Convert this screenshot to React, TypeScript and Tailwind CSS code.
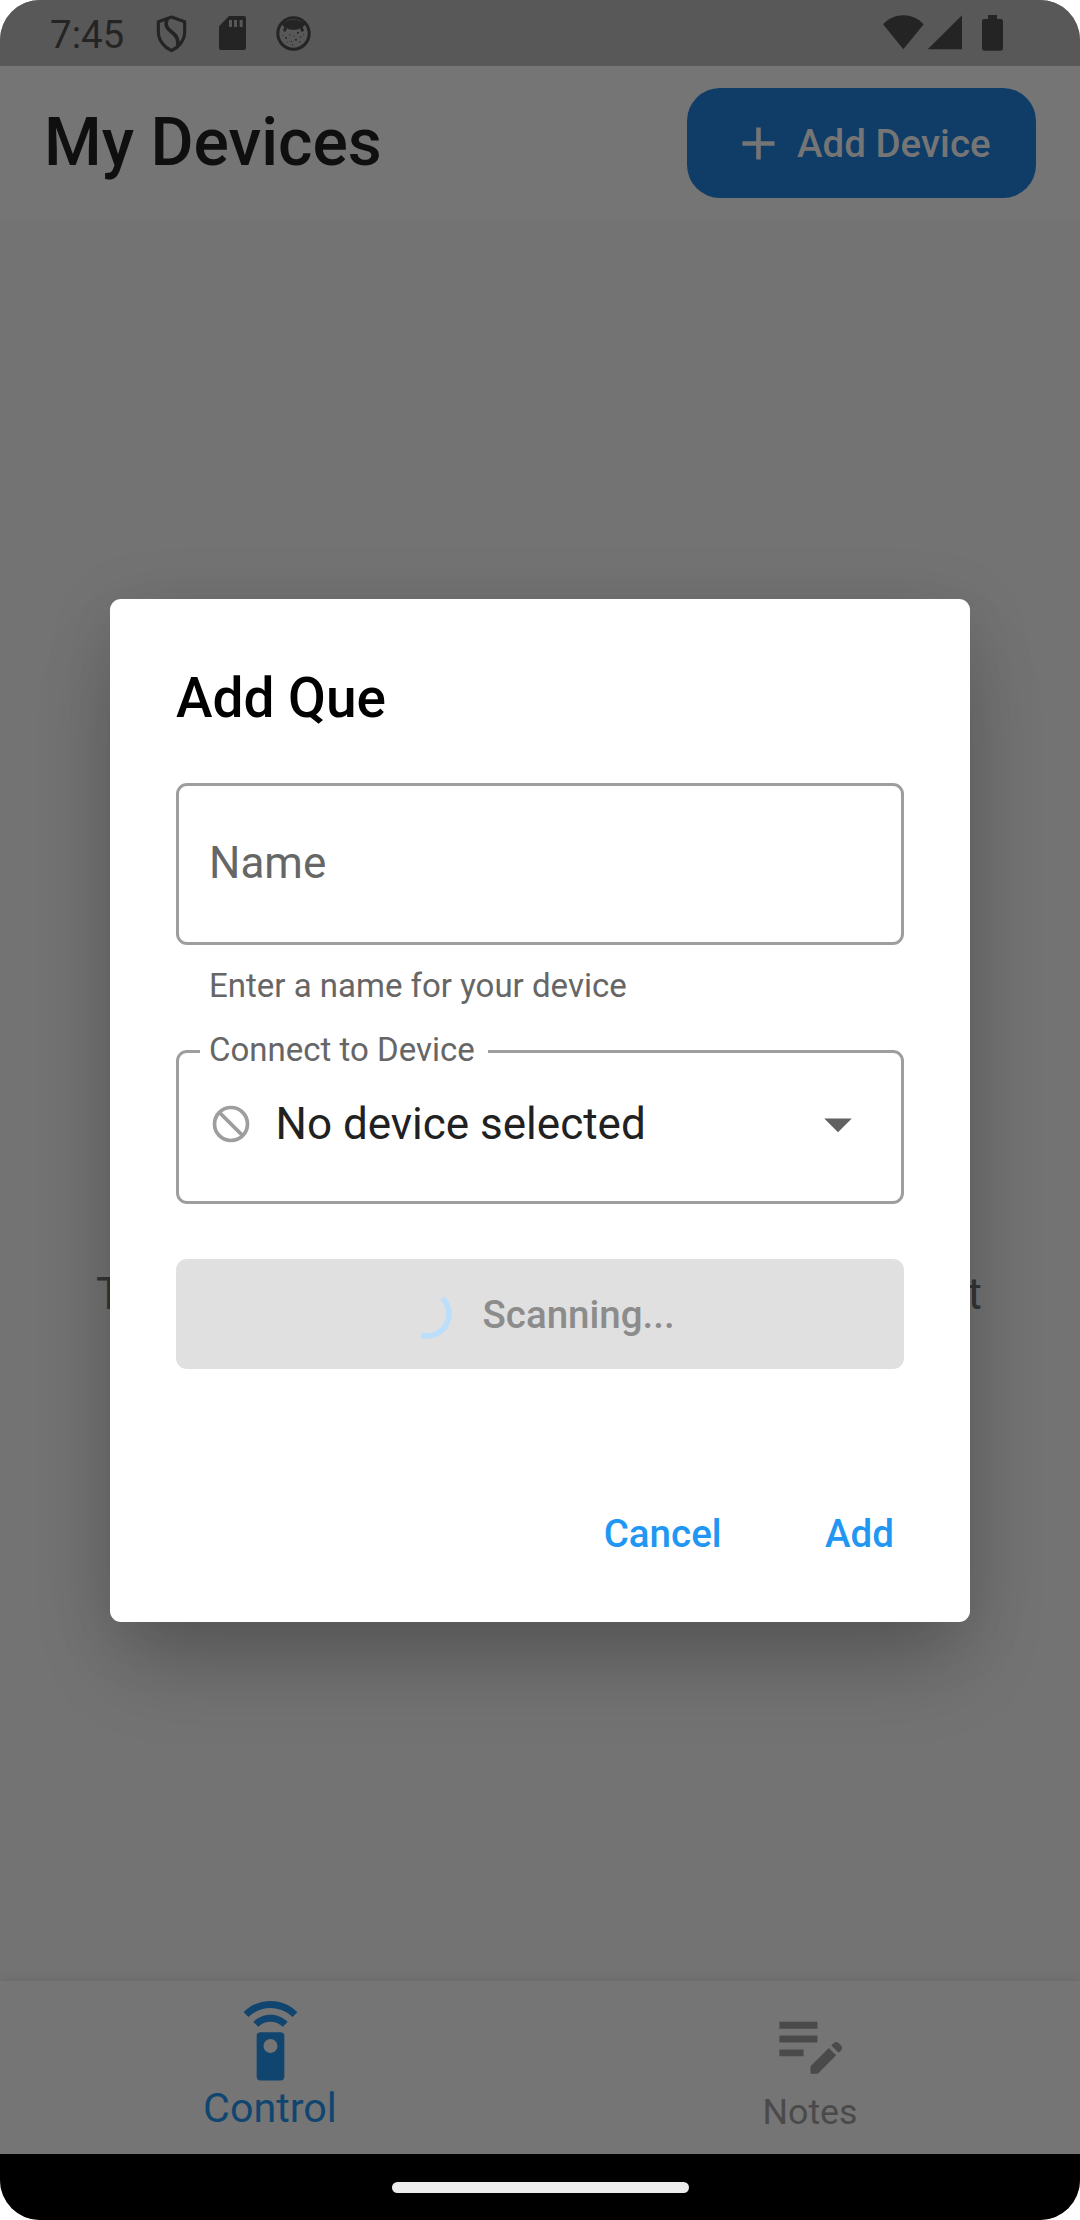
import type { ReactNode } from "react";

function StatusBar() {
  return (
    <div className="flex h-[66px] shrink-0 items-start justify-between bg-[#585858] text-[#242424]">
      <div className="flex items-start">
        <span className="ml-[50px] mt-[12px] w-[74px] text-[38.5px] leading-[45px]">7:45</span>
        {/* Shield */}
        <svg className="ml-[32px] mt-[14.5px] h-[38px] w-[31px]" viewBox="0 0 93 114" fill="none" stroke="currentColor" strokeWidth="9.5" strokeLinejoin="round">
          <path d="M46.500 6L86 20V51C86 76 68 97 46.500 107C25 97 7 76 7 51V20Z" />
          <path strokeWidth="11" d="M34 11C25 31 33 40 47 51C62 63 68 72 65 92" />
        </svg>
        {/* Memory card */}
        <svg className="ml-[32px] mt-[16px] h-[34px] w-[27px]" viewBox="0 0 81 102">
          <path fill="currentColor" d="M30 0H75q6 0 6 6V96q0 6-6 6H6q-6 0-6-6V31Z" />
          <path fill="#585858" d="M30 12h9v21h-9zM45 12h9v21h-9zM62 12h9v21h-9z" />
        </svg>
        {/* Round face */}
        <svg className="ml-[30px] mt-[15.700px] h-[35px] w-[35px]" viewBox="0 0 105 105">
          <circle cx="52.500" cy="52.500" r="47" fill="none" stroke="currentColor" strokeWidth="9" />
          <path fill="currentColor" d="M18 26C32 6 73 6 87 26L80 34L84 44L77 48L72 37C64 43 42 43 33 37L28 48L21 44L25 34Z" />
          <g fill="currentColor">
            <circle cx="30" cy="66" r="3" />
            <circle cx="66" cy="50" r="3" />
            <circle cx="60" cy="71" r="3" />
            <circle cx="46" cy="76" r="2" />
            <circle cx="42" cy="56" r="2" />
            <circle cx="74" cy="63" r="2" />
            <circle cx="54" cy="60" r="1.500" />
            <circle cx="50" cy="87" r="2" />
            <circle cx="72" cy="78" r="2" />
            <circle cx="35" cy="79" r="1.500" />
            <circle cx="20" cy="58" r="1.500" />
            <circle cx="83" cy="56" r="1.500" />
          </g>
        </svg>
      </div>
      <svg className="mr-[77px] mt-[15px] h-[36px] w-[120px]" viewBox="0 0 360 108" fill="currentColor">
        <path d="M0 28C34-8 88-8 122 28L61 103Z" />
        <path d="M134 103H237V1Z" />
        <path d="M315 0h27v12h12q6 0 6 7v81q0 7-6 7h-51q-6 0-6-7v-81q0-7 6-7h12z" />
      </svg>
    </div>
  );
}

function Header() {
  return (
    <header className="flex h-[154px] shrink-0 items-center justify-between bg-[#757575] px-[44px]">
      <h1 className="text-[66px] font-medium leading-[78px] text-[#0f0f0f]">My Devices</h1>
      <button className="flex h-[110px] w-[349px] items-center gap-[11px] rounded-[33px] bg-[#0f3d68] pl-[44px] text-[#757575]">
        <svg className="size-[55px]" viewBox="0 0 24 24" fill="currentColor">
          <path d="M19 13h-6v6h-2v-6H5v-2h6V5h2v6h6v2z" />
        </svg>
        <span className="whitespace-nowrap pt-[2px] text-[38.5px] font-medium leading-[46px]">Add Device</span>
      </button>
    </header>
  );
}

function NavItem({ children, className }: { children: ReactNode; className: string }) {
  return <div className={`flex flex-1 flex-col items-center pt-[20px] ${className}`}>{children}</div>;
}

function BottomNav() {
  return (
    <nav className="flex h-[173px] shrink-0 bg-[#757575] shadow-[0_-2px_10px_rgba(0,0,0,0.08)]">
      <NavItem className="text-[#104570]">
        <svg className="h-[83px] w-[83px]" viewBox="0 0 24 24" fill="currentColor">
          <path d="M15 9H9c-.55 0-1 .45-1 1v12c0 .55.45 1 1 1h6c.55 0 1-.45 1-1V10c0-.55-.45-1-1-1zm-3 6c-1.100 0-2-.9-2-2s.9-2 2-2 2 .9 2 2-.9 2-2 2zM7.050 6.050l1.410 1.410C9.370 6.560 10.620 6 12 6s2.630.56 3.540 1.460l1.410-1.410C15.680 4.780 13.930 4 12 4s-3.680.78-4.950 2.050zM12 0C8.960 0 6.210 1.230 4.220 3.220l1.410 1.410C7.260 3.010 9.510 2 12 2s4.740 1.010 6.360 2.640l1.410-1.410C17.790 1.230 15.040 0 12 0z" />
        </svg>
        <span className="text-[41.25px] leading-[48px]">Control</span>
      </NavItem>
      <NavItem className="text-[#4a4a4a]">
        <svg className="h-[83px] w-[83px]" viewBox="0 0 24 24" fill="currentColor">
          <path d="M3 10h11v2H3v-2zm0-2h11V6H3v2zm0 8h7v-2H3v2zm15.010-3.130.71-.71c.39-.39 1.020-.39 1.410 0l.71.71c.39.39.39 1.020 0 1.410l-.71.71-2.120-2.120zm-.71.71-5.300 5.300V21h2.120l5.300-5.300-2.120-2.120z" />
        </svg>
        <span className="mt-[7px] text-[35.75px] leading-[42px]">Notes</span>
      </NavItem>
    </nav>
  );
}

function AddDialog() {
  return (
    <div
      role="dialog"
      className="absolute left-[110px] top-[598.5px] flex h-[1023px] w-[860px] flex-col rounded-[11px] bg-white px-[66px] pb-[64px] pt-[66px] shadow-[0_50px_80px_-14px_rgba(0,0,0,0.22),0_10px_70px_0_rgba(0,0,0,0.1)]"
    >
      <h2 className="shrink-0 text-[55px] font-medium leading-[66px] text-black">Add Que</h2>

      <div className="mt-[52.500px] flex h-[162px] shrink-0 items-center rounded-[11px] border-[3px] border-[#9e9e9e] px-[30px] pb-[3px] text-[44px] leading-[52px] text-[#666666]">
        Name
      </div>
      <p className="mt-[21px] shrink-0 pl-[33px] text-[33px] leading-[39px] text-[#666666]">Enter a name for your device</p>

      <fieldset className="mt-[22px] h-[177px] shrink-0 rounded-[11px] border-[3px] border-[#9e9e9e] pl-[20.5px]">
        <legend className="h-[48px] w-[288px] pl-[9.5px] text-[33px] leading-[45px] text-[#666666]">Connect to Device</legend>
        <div className="mt-[16px] flex items-center pl-[9.5px]">
          <svg className="size-[44px] shrink-0" viewBox="0 0 24 24" fill="none" stroke="#9e9e9e" strokeWidth="2">
            <circle cx="12" cy="12" r="9" />
            <path d="M5.640 5.640L18.360 18.360" />
          </svg>
          <span className="ml-[22.5px] flex-1 whitespace-nowrap text-[44px] leading-[52px] text-[#212121]">No device selected</span>
          <svg className="mr-[30px] size-[66px]" viewBox="0 0 24 24" fill="#616161">
            <path d="M7 10l5 5 5-5z" />
          </svg>
        </div>
      </fieldset>

      <button className="mt-[55px] flex h-[110px] shrink-0 items-center rounded-[11px] bg-[#e0e0e0] pl-[229px]">
        <svg className="size-[44px] overflow-visible" viewBox="-22 -22 44 44" fill="none" stroke="#bbdefb" strokeWidth="5.500">
          <path d="M15.300 -15.800A22 22 0 0 1 -5.700 21.250" />
        </svg>
        <span className="ml-[33.5px] pt-[2px] text-[38.5px] font-medium leading-[46px] text-[#8c8c8c]">Scanning...</span>
      </button>

      <div className="mt-[142px] flex shrink-0 justify-end gap-[103.5px] pr-[10px] text-[38.5px] font-medium leading-[46px] text-[#2196f3]">
        <span>Cancel</span>
        <span>Add</span>
      </div>
    </div>
  );
}

export default function App() {
  return (
    <div className="h-[2220px] w-[1080px] bg-white font-[Roboto,sans-serif]">
      <div className="relative flex h-full flex-col overflow-hidden rounded-[40px] bg-[#737373]">
        <StatusBar />
        <Header />
        <main className="flex flex-1 items-start justify-between px-[96px] pt-[1048px] text-[44px] leading-[52px] text-[#353535]">
          <span>T</span>
          <span className="mr-[2px]">t</span>
        </main>
        <BottomNav />
        <div className="flex h-[66px] shrink-0 items-center justify-center bg-black">
          <div className="h-[11px] w-[297px] rounded-full bg-[#ececec]" />
        </div>
        <AddDialog />
      </div>
    </div>
  );
}
